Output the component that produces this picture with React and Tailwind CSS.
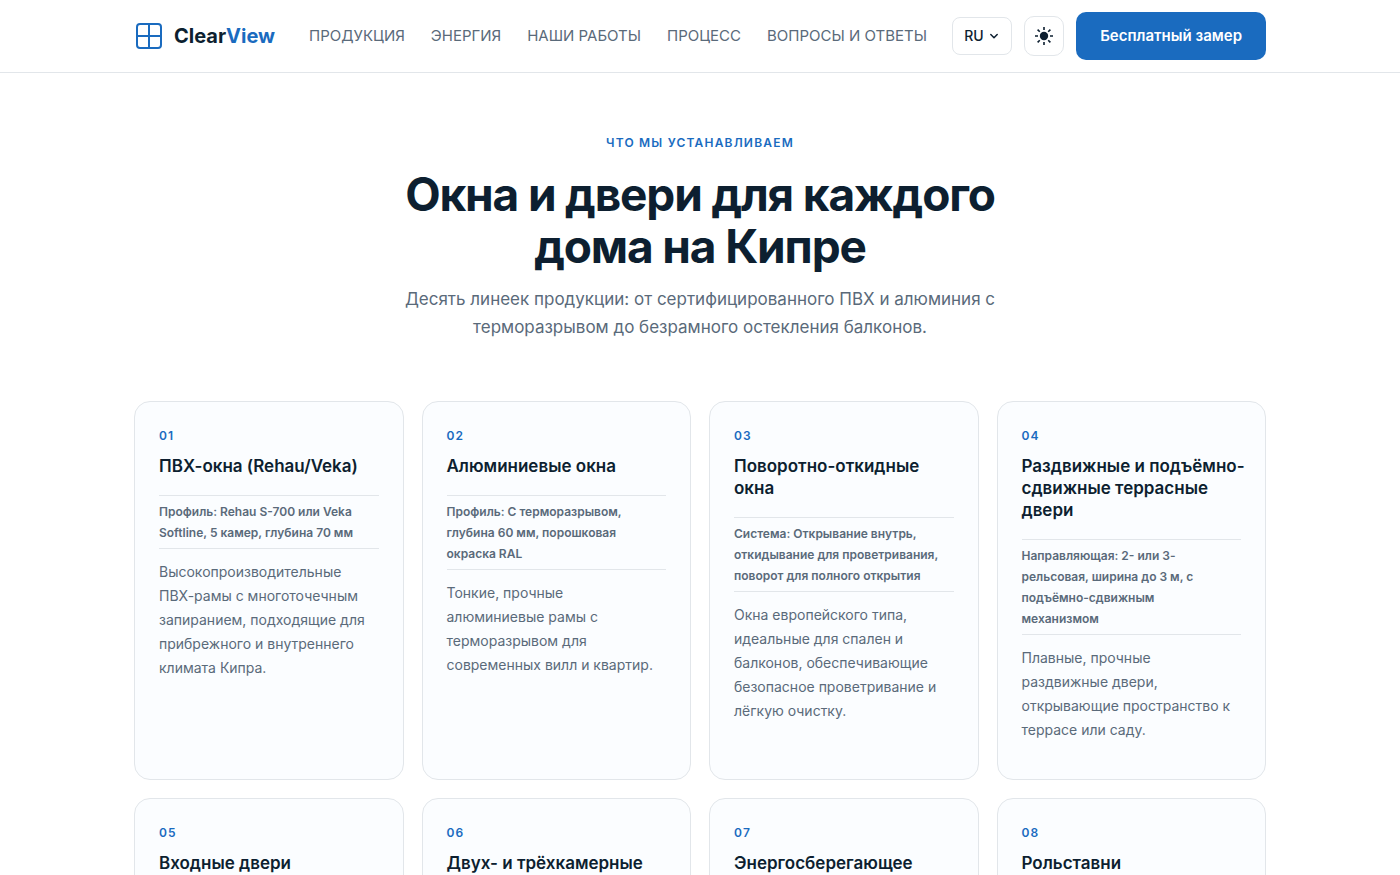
import { useState } from "react";

const navLinks = [
  { label: "Продукция", href: "#products" },
  { label: "Энергия", href: "#energy" },
  { label: "Наши работы", href: "#gallery" },
  { label: "Процесс", href: "#process" },
  { label: "Вопросы и ответы", href: "#faq" },
];

const products = [
  {
    title: "ПВХ-окна (Rehau/Veka)",
    spec: "Профиль: Rehau S-700 или Veka Softline, 5 камер, глубина 70 мм",
    text: "Высокопроизводительные ПВХ-рамы с многоточечным запиранием, подходящие для прибрежного и внутреннего климата Кипра.",
  },
  {
    title: "Алюминиевые окна",
    spec: "Профиль: С терморазрывом, глубина 60 мм, порошковая окраска RAL",
    text: "Тонкие, прочные алюминиевые рамы с терморазрывом для современных вилл и квартир.",
  },
  {
    title: "Поворотно-откидные окна",
    spec: "Система: Открывание внутрь, откидывание для проветривания, поворот для полного открытия",
    text: "Окна европейского типа, идеальные для спален и балконов, обеспечивающие безопасное проветривание и лёгкую очистку.",
  },
  {
    title: "Раздвижные и подъёмно-сдвижные террасные двери",
    spec: "Направляющая: 2- или 3-рельсовая, ширина до 3 м, с подъёмно-сдвижным механизмом",
    text: "Плавные, прочные раздвижные двери, открывающие пространство к террасе или саду.",
  },
  { title: "Входные двери" },
  { title: "Двух- и трёхкамерные" },
  { title: "Энергосберегающее" },
  { title: "Рольставни" },
];

const LogoIcon = () => (
  <svg width="30" height="30" viewBox="0 0 30 30" fill="none" stroke="#1a6bbf" strokeWidth="2" aria-hidden="true">
    <rect x="3" y="3" width="24" height="24" rx="3" />
    <path d="M15 3v24M3 15h24" />
  </svg>
);

const SunIcon = () => (
  <svg
    width="18"
    height="18"
    viewBox="0 0 18 18"
    fill="none"
    stroke="currentColor"
    strokeWidth="1.6"
    aria-hidden="true"
  >
    <circle cx="9" cy="9" r="4.2" fill="currentColor" stroke="none" />
    <path d="M9 0v3M9 15v3M0 9h3M15 9h3M2.6 2.6l2.2 2.2M13.2 13.2l2.2 2.2M2.6 15.4l2.2-2.2M13.2 4.8l2.2-2.2" />
  </svg>
);

const Header = () => {
  const [lang, setLang] = useState("RU");

  return (
    <header className="sticky top-0 z-10 border-b border-[#e2e6ea] bg-white">
      <div className="mx-auto flex h-18 max-w-[1180px] items-center px-6">
        <a href="#top" className="flex items-center gap-2.5 text-xl font-bold text-[#0d1f30]">
          <LogoIcon />
          <span>
            Clear<span className="text-[#1a6bbf]">View</span>
          </span>
        </a>

        <nav className="ml-[34px] flex items-center gap-[26px] whitespace-nowrap text-[15px] uppercase text-[#5a6a7a]">
          {navLinks.map((link) => (
            <a key={link.href} href={link.href} className="hover:text-[#1a6bbf]">
              {link.label}
            </a>
          ))}
        </nav>

        <div className="ml-auto flex items-center gap-3">
          {/* Language */}
          <div className="relative">
            <select
              aria-label="Язык"
              value={lang}
              onChange={(e) => setLang(e.target.value)}
              className="block h-[38px] w-[60px] appearance-none rounded-lg border border-[#e2e6ea] bg-white pl-[11px] text-sm font-medium text-[#0d1f30]"
            >
              <option>RU</option>
              <option>EN</option>
            </select>
            <svg
              className="pointer-events-none absolute right-3 top-3.5"
              width="12"
              height="10"
              viewBox="0 0 12 10"
              fill="none"
              stroke="#0d1f30"
              strokeWidth="1.5"
              strokeLinecap="round"
              strokeLinejoin="round"
              aria-hidden="true"
            >
              <path d="M2.8 3.5l3.2 3.2 3.2-3.2" />
            </svg>
          </div>

          {/* Theme */}
          <button
            type="button"
            aria-label="Сменить тему"
            className="flex size-10 items-center justify-center rounded-[10px] border border-[#e2e6ea] text-[#0d1f30]"
          >
            <SunIcon />
          </button>

          <button
            type="button"
            className="h-12 whitespace-nowrap rounded-[10px] bg-[#1a6bbf] px-6 text-[15px] font-semibold text-white"
          >
            Бесплатный замер
          </button>
        </div>
      </div>
    </header>
  );
};

const ProductCard = ({ number, title, spec, text }) => (
  <article className="rounded-2xl border border-[#e2e6ea] bg-[#fbfdff] px-6 pt-6 pb-8">
    <p className="text-xs leading-5 font-semibold tracking-widest text-[#1a6bbf]">{number}</p>
    {/* titles may run a little into the side padding */}
    <h3 className="mt-[9px] -mr-1.5 text-[17px] leading-[22px] font-semibold text-[#0d1f30]">{title}</h3>
    {spec && (
      <p className="mt-[18px] border-y border-[#e2e6ea] py-[5px] pr-2 text-xs leading-[21px] font-semibold text-[#5a6a7a]">
        {spec}
      </p>
    )}
    {text && <p className="mt-[11px] pr-2 text-sm leading-6 text-[#5a6a7a]">{text}</p>}
  </article>
);

const App = () => (
  <div id="top" className="min-h-screen bg-white font-['Inter',sans-serif]">
    <Header />

    <main id="products" className="mx-auto max-w-[1180px] px-6 pt-[60px] pb-20">
      <div className="mx-auto max-w-[620px] text-center">
        <p className="text-xs leading-5 font-semibold uppercase tracking-widest text-[#1a6bbf]">
          Что мы устанавливаем
        </p>
        <h2 className="mt-[15px] text-[46px] leading-[52px] font-bold tracking-tight text-[#0d1f30]">
          Окна и двери для каждого дома на Кипре
        </h2>
        <p className="mt-[13px] text-[17px] leading-7 text-[#5a6a7a]">
          Десять линеек продукции: от сертифицированного ПВХ и алюминия с терморазрывом до безрамного остекления
          балконов.
        </p>
      </div>

      <div className="mt-15 grid auto-rows-[minmax(379px,auto)] grid-cols-4 gap-[18px]">
        {products.map((product, index) => (
          <ProductCard key={product.title} number={String(index + 1).padStart(2, "0")} {...product} />
        ))}
      </div>
    </main>
  </div>
);

export default App;
